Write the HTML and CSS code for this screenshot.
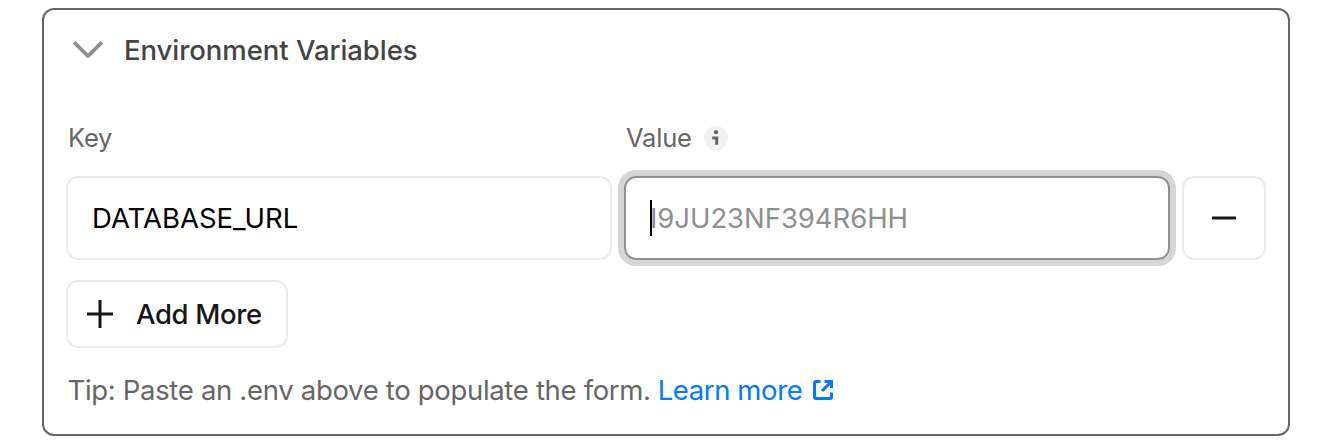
FILE: index.html
```html
<!DOCTYPE html>
<html lang="en">
<head>
<meta charset="utf-8">
<title>Environment Variables</title>
<link rel="stylesheet" href="styles.css">
</head>
<body>
<section class="card">
  <header class="card-header">
    <svg class="chevron" width="32" height="20" viewBox="0 0 32 20"><path d="M2.2 2.4 14.9 15.1Q16 16.2 17.1 15.1L29.8 2.4"/></svg>
    <h2 class="title">Environment Variables</h2>
  </header>
  <div class="grid labels">
    <span class="label"><span class="label-key">Key</span></span>
    <span class="label"><span class="label-value">Value</span>
      <svg class="info" width="24" height="24" viewBox="0 0 24 24"><circle class="info-bg" cx="12" cy="12" r="12"/><circle class="info-dot" cx="12" cy="6.1" r="2.2"/><path d="M8.2 12h4.5v6.7"/></svg>
    </span>
  </div>
  <div class="grid fields">
    <div class="field"><span class="field-text">DATABASE_URL</span></div>
    <div class="field field-focus"><span class="caret"></span><span class="placeholder">I9JU23NF394R6HH</span></div>
    <button class="remove" aria-label="Remove"><svg width="24" height="4" viewBox="0 0 24 4"><path d="M0 2h24"/></svg></button>
  </div>
  <button class="add"><svg width="26" height="28" viewBox="0 0 26 28"><path d="M13 0v28M0 14h26"/></svg><span class="add-text">Add More</span></button>
  <p class="tip"><span class="tip-text">Tip: Paste an .env above to populate the form.</span><a class="link"><span class="link-text">Learn more</span><svg class="external" width="20" height="20" viewBox="0 0 20 20"><path d="M7.5 1.5H3A1.5 1.5 0 0 0 1.5 3v14A1.5 1.5 0 0 0 3 18.5h14a1.5 1.5 0 0 0 1.5-1.5v-4.5M11.5 1.5h7v6.5M18.5 1.5 9 11"/></svg></a></p>
</section>
</body>
</html>
```
FILE: styles.css
```css
* { box-sizing: border-box; }
body { margin: 0; height: 448px; padding: 8px 36px 12px 42px; background: #fff; font-family: Inter, "Liberation Sans", sans-serif; font-size: 27.5px; color: #666; overflow: hidden; }
svg { display: block; flex: none; fill: none; }
button { font: inherit; background: #fff; padding: 0; }
span { white-space: nowrap; }
.card { height: 428px; border: 2px solid #666; border-radius: 12px; padding: 0 22px; }
.card-header { display: flex; align-items: center; height: 80px; padding-left: 6px; gap: 20px; }
.chevron { stroke: #8f8f8f; stroke-width: 3.8; stroke-linejoin: round; }
.title { margin: 0; font-size: 27.5px; font-weight: 500; color: #444; letter-spacing: -0.05px; }
.grid { display: grid; grid-template-columns: 546px 546px 84px; gap: 12px; }
.labels { height: 86px; padding-top: 30px; font-size: 25.5px; line-height: 36px; letter-spacing: -0.2px; }
.label { display: flex; align-items: center; height: 36px; padding-left: 2px; gap: 12px; }
.info-bg { fill: #f2f2f2; }
.info-dot { fill: #666; }
.info { stroke: none; }
.info path { stroke: #666; stroke-width: 3; }
.field, .remove { height: 84px; border: 2px solid #ebebeb; border-radius: 12px; display: flex; align-items: center; }
.field { padding-left: 24px; color: #000; }
.field-focus { border-color: #8f8f8f; box-shadow: 0 0 0 6px #d6d6d6; }
.caret { width: 2px; height: 36px; margin-right: -2px; background: #000; }
.placeholder { color: #8f8f8f; letter-spacing: -0.05px; }
.remove { justify-content: center; stroke: #171717; stroke-width: 3; }
.add { display: flex; align-items: center; width: 222px; height: 68px; margin-top: 20px; padding-left: 19px; gap: 23px; border: 2px solid #ebebeb; border-radius: 12px; color: #171717; font-weight: 500; letter-spacing: -0.35px; }
.add svg { stroke: #171717; stroke-width: 3; }
.tip { display: flex; align-items: center; margin: 24px 0 0; padding-left: 1.5px; height: 36px; gap: 7px; letter-spacing: -0.32px; }
.link { display: flex; align-items: center; gap: 10.5px; color: #007aff; letter-spacing: -0.4px; }
.external { stroke: #007aff; stroke-width: 3; }
```
